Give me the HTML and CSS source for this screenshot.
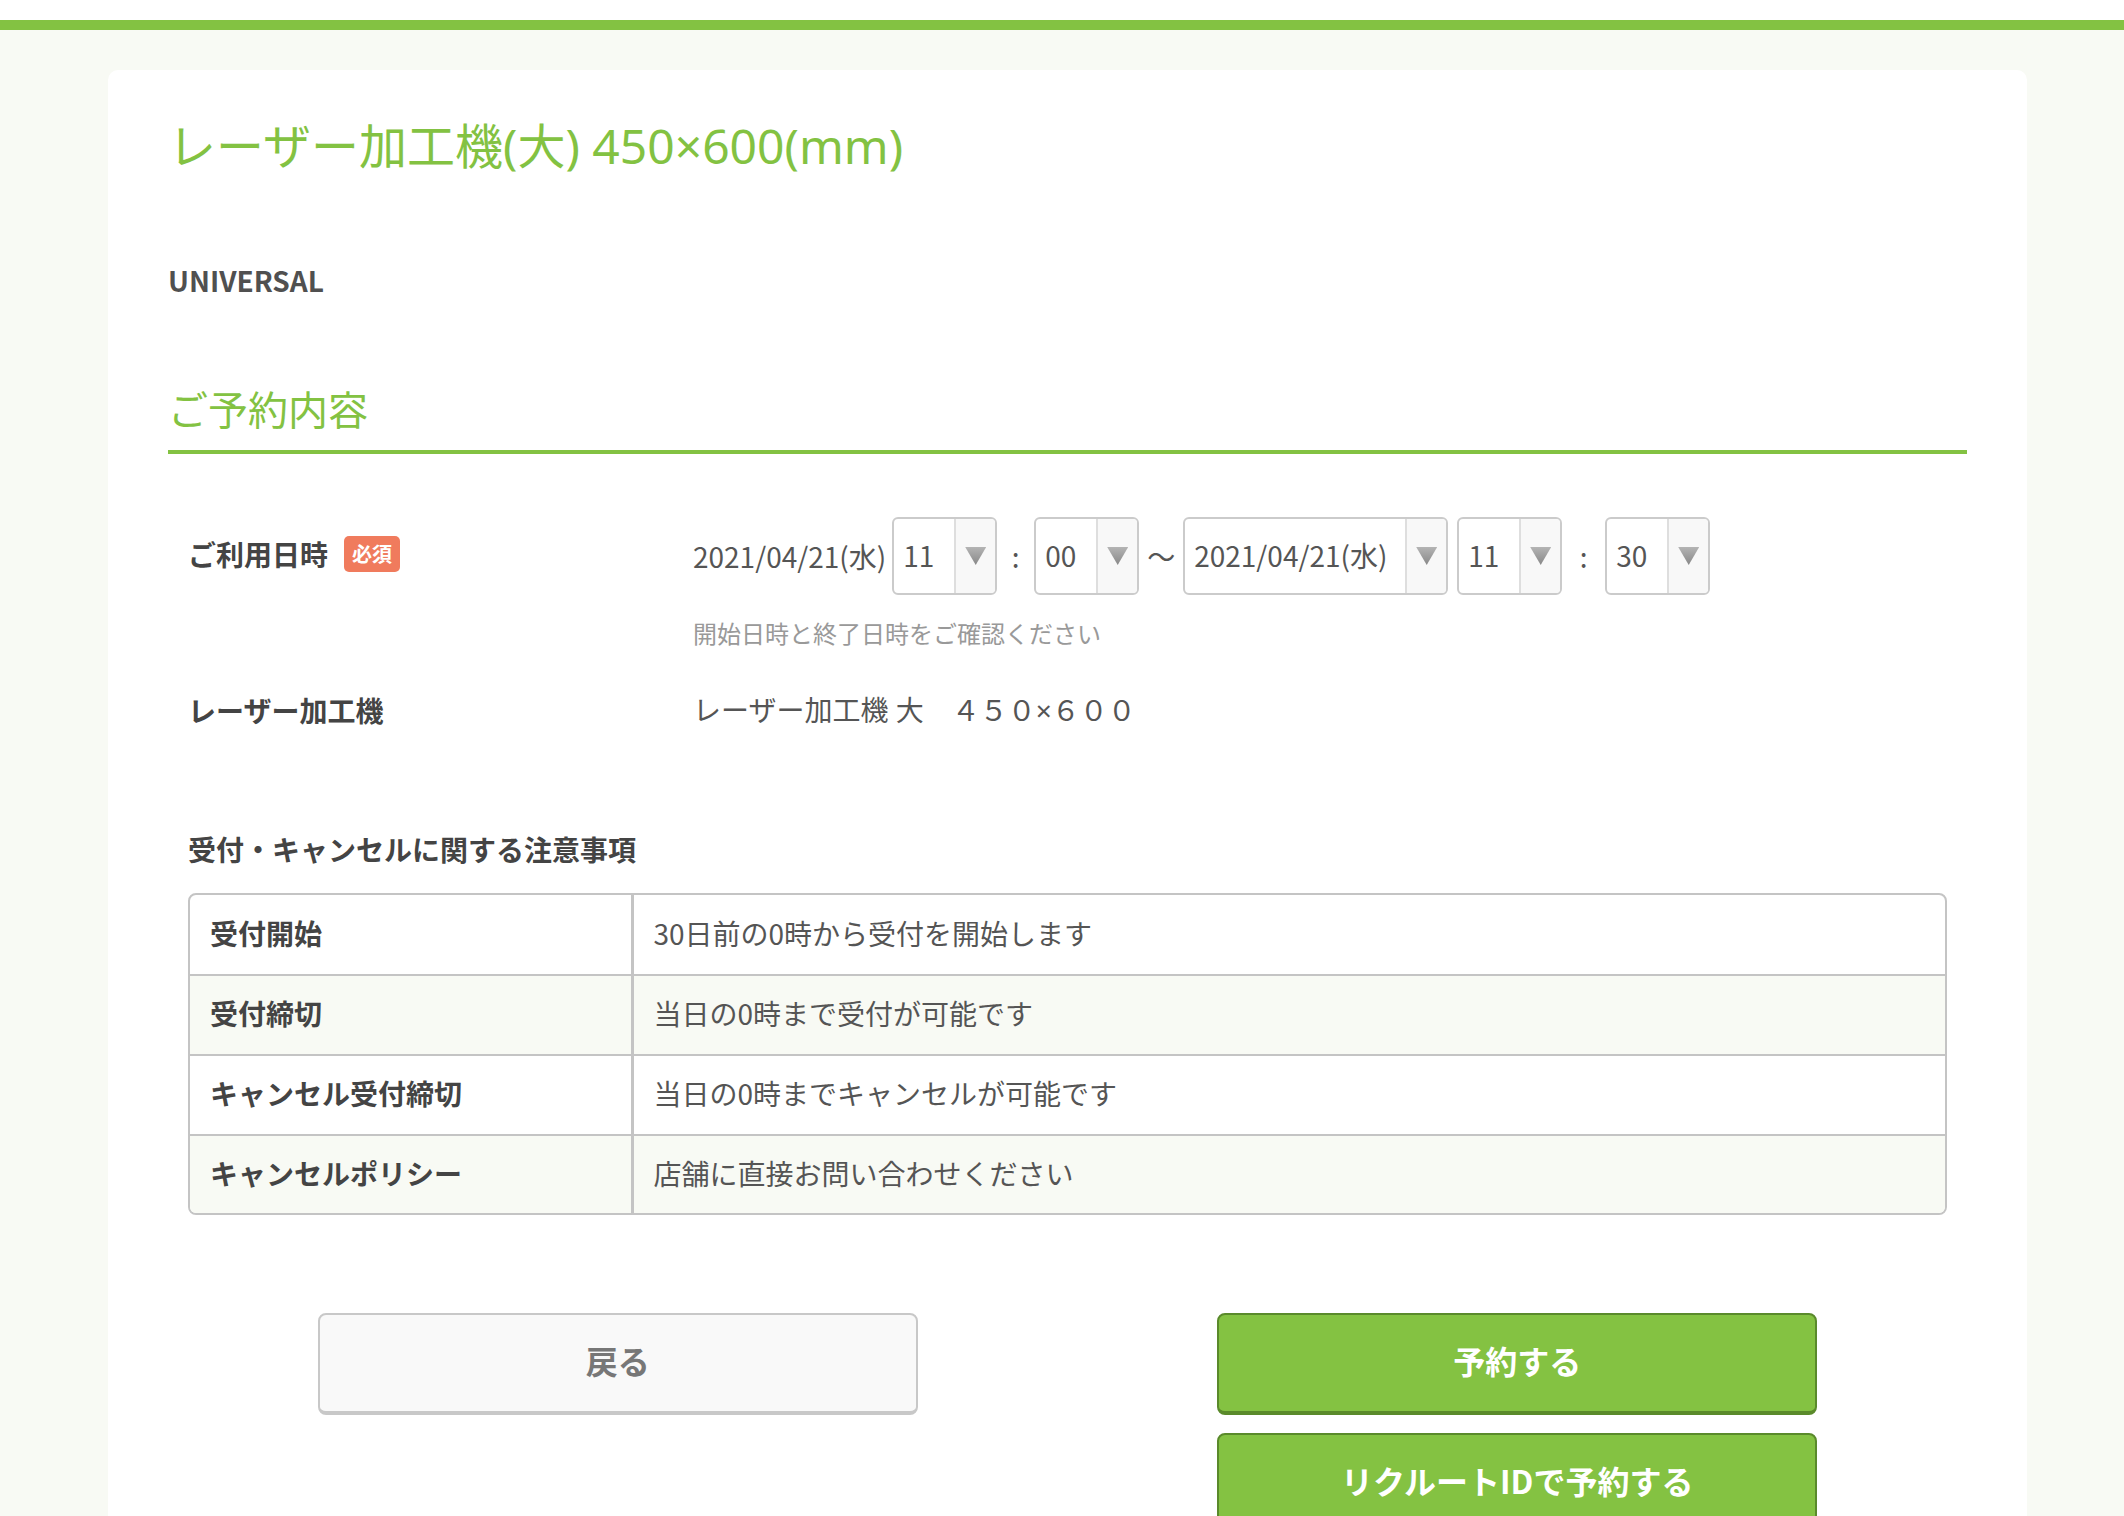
FILE: index.html
```html
<!DOCTYPE html>
<html lang="ja">

<head>
    <meta charset="UTF-8">
    <meta name="viewport" content="width=device-width, initial-scale=1.0">
    <title>ご予約内容</title>
    <link rel="stylesheet" href="styles.css">
</head>

<body>
    <div class="header">
        <div class="top-bar"></div>
    </div>
    <div class="wrap">
        <div class="card">
            <h1 class="item-title">レーザー加工機(大) 450×600(mm)</h1>
            <p class="shop-name">UNIVERSAL</p>
            <h2 class="section-title">ご予約内容</h2>

            <div class="form">
                <div class="form-row date-row">
                    <div class="form-label">ご利用日時<span class="required">必須</span></div>
                    <div class="form-value">
                        <div class="date-line">
                            <span class="date-text">2021/04/21(水)</span>
                            <div class="select sel-time"><span class="select-val">11</span><span class="select-arrow"></span></div>
                            <span class="sep sep-a">:</span>
                            <div class="select sel-time"><span class="select-val">00</span><span class="select-arrow"></span></div>
                            <span class="sep sep-tilde">〜</span>
                            <div class="select sel-date"><span class="select-val">2021/04/21(水)</span><span class="select-arrow"></span></div>
                            <div class="select sel-time sel-end"><span class="select-val">11</span><span class="select-arrow"></span></div>
                            <span class="sep sep-b">:</span>
                            <div class="select sel-time"><span class="select-val">30</span><span class="select-arrow"></span></div>
                        </div>
                        <p class="form-note">開始日時と終了日時をご確認ください</p>
                    </div>
                </div>

                <div class="form-row machine-row">
                    <div class="form-label">レーザー加工機</div>
                    <div class="form-value machine-value">レーザー加工機 大　４５０×６００</div>
                </div>

                <h3 class="notice-title">受付・キャンセルに関する注意事項</h3>
                <div class="notice-box">
                    <table class="notice-table">
                        <tr>
                            <th>受付開始</th>
                            <td>30日前の0時から受付を開始します</td>
                        </tr>
                        <tr class="even">
                            <th>受付締切</th>
                            <td>当日の0時まで受付が可能です</td>
                        </tr>
                        <tr>
                            <th>キャンセル受付締切</th>
                            <td>当日の0時までキャンセルが可能です</td>
                        </tr>
                        <tr class="even">
                            <th>キャンセルポリシー</th>
                            <td>店舗に直接お問い合わせください</td>
                        </tr>
                    </table>
                </div>
            </div>

            <div class="btn-area">
                <div class="btn-col">
                    <a class="btn btn-back">戻る</a>
                </div>
                <div class="btn-col">
                    <a class="btn btn-main">予約する</a>
                    <a class="btn btn-main">リクルートIDで予約する</a>
                </div>
            </div>
        </div>
    </div>
</body>

</html>
```
FILE: styles.css
```css
* {
    margin: 0;
    padding: 0;
    box-sizing: border-box;
}

body {
    background-color: #fff;
    font-family: "Noto Sans CJK JP", "Noto Sans", sans-serif;
    color: #444;
}

.header {
    padding-top: 20px;
    background-color: #fff;
}

.top-bar {
    height: 10px;
    background-color: #83c242;
}

.wrap {
    background-color: #f8faf4;
    padding: 40px 97px 0 108px;
    min-height: 1486px;
}

.card {
    background-color: #fff;
    border-radius: 10px;
    padding: 40px 60px 60px;
}

.item-title {
    font-family: "Noto Sans", "Noto Sans CJK JP", sans-serif;
    font-size: 48px;
    line-height: 72px;
    font-weight: normal;
    color: #83c242;
}

.shop-name {
    margin-top: 78px;
    font-size: 28px;
    line-height: 40px;
    font-weight: bold;
    color: #505050;
}

.section-title {
    margin-top: 78px;
    font-size: 40px;
    line-height: 60px;
    font-weight: normal;
    color: #83c242;
    padding-bottom: 12px;
    border-bottom: 4px solid #83c242;
}

.form {
    padding: 0 20px;
}

.form-row {
    display: grid;
    grid-template-columns: 505px 1fr;
    font-size: 28px;
}

.form-label {
    font-weight: bold;
    color: #444;
    display: flex;
    align-items: center;
    height: 40px;
}

.form-value {
    color: #555;
    line-height: 40px;
}

.date-row {
    margin-top: 63px;
}

.date-row .form-label {
    height: 74px;
}

.required {
    display: inline-block;
    margin-left: 16px;
    width: 56px;
    height: 36px;
    line-height: 35px;
    border-radius: 5px;
    background-color: #f07b5d;
    color: #fff;
    font-size: 20px;
    font-weight: bold;
    text-align: center;
}

.date-line {
    display: flex;
    align-items: center;
    height: 78px;
}

.date-text {
    margin-right: 6px;
}

.select {
    display: flex;
    height: 78px;
    border: 2px solid #cbcbcb;
    border-radius: 6px;
    background-color: #fff;
    overflow: hidden;
}

.sel-time {
    width: 105px;
}

.sel-date {
    width: 265px;
}

.sel-end {
    margin-left: 9px;
}

.select-val {
    flex: 1;
    padding-left: 9px;
    line-height: 72px;
    color: #555;
    white-space: nowrap;
}

.select-arrow {
    width: 41px;
    border-left: 2px solid #dedede;
    background-color: #f8f8f8;
    display: flex;
    align-items: center;
    justify-content: center;
}

.select-arrow::after {
    content: "";
    width: 21px;
    height: 18px;
    background: linear-gradient(#b4b4b4, #888);
    clip-path: polygon(0 0, 100% 0, 50% 100%);
}

.sep {
    display: inline-block;
    text-align: center;
    color: #555;
}

.sep-a {
    width: 37px;
}

.sep-tilde {
    width: 44px;
}

.sep-b {
    width: 43px;
}

.form-note {
    margin-top: 20px;
    font-size: 24px;
    line-height: 36px;
    color: #999;
}

.machine-row {
    margin-top: 39px;
}

.machine-value {
    font-family: "Noto Sans", "Noto Sans CJK JP", sans-serif;
}

.notice-title {
    margin-top: 99px;
    font-size: 28px;
    line-height: 40px;
    font-weight: bold;
    color: #444;
}

.notice-box {
    margin-top: 24px;
    border: 2px solid #c4c4c4;
    border-radius: 8px;
    overflow: hidden;
}

.notice-table {
    width: 100%;
    border-collapse: collapse;
    font-size: 28px;
    line-height: 36px;
}

.notice-table tr {
    height: 80px;
    border-bottom: 2px solid #c4c4c4;
}

.notice-table tr:last-child {
    height: 78px;
    border-bottom: none;
}

.notice-table .even {
    background-color: #f8faf4;
}

.notice-table th,
.notice-table td {
    padding-bottom: 4px;
}

.notice-table th {
    width: 442px;
    text-align: left;
    padding-left: 20px;
    font-weight: bold;
    color: #444;
    border-right: 3px solid #c4c4c4;
}

.notice-table td {
    padding-left: 20px;
    color: #555;
}

.btn-area {
    margin-top: 98px;
    display: grid;
    grid-template-columns: 1fr 1fr;
}

.btn-col {
    display: flex;
    flex-direction: column;
    align-items: center;
    gap: 18px;
}

.btn {
    display: block;
    width: 600px;
    height: 102px;
    border: 2px solid;
    border-bottom-width: 4px;
    border-radius: 8px;
    font-size: 32px;
    font-weight: bold;
    line-height: 90px;
    padding-bottom: 6px;
    text-align: center;
    cursor: pointer;
}

.btn-back {
    background-color: #f9f9f9;
    border-color: #c8c8c8;
    color: #777;
}

.btn-main {
    background-color: #84c242;
    border-color: #5a8a2b;
    color: #fff;
}
```
